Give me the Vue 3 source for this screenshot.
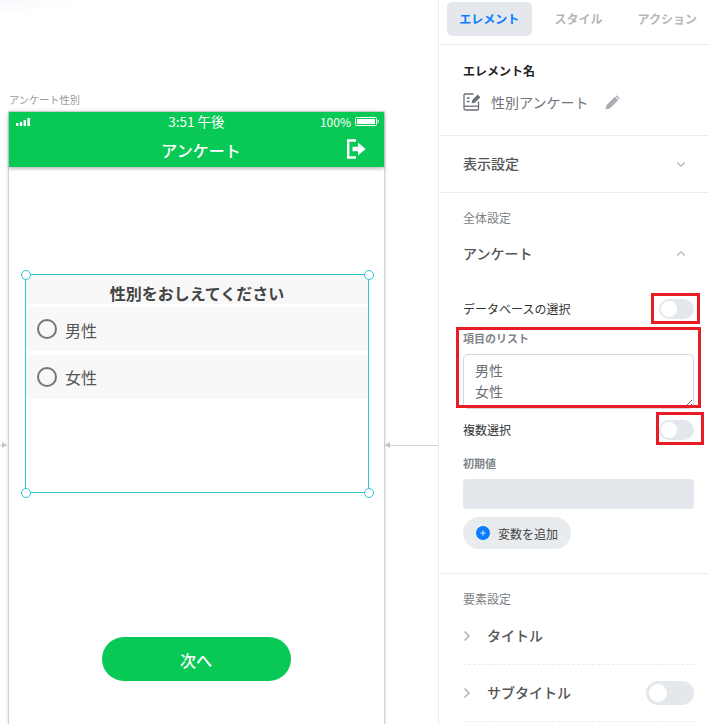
<template>
  <div class="page">
    <div class="canvas">
      <div class="screen-wrap">
        <div class="screen-name">アンケート性別</div>
        <div class="phone">
          <header class="app-head">
            <div class="status">
              <svg class="signal" width="15" height="8" viewBox="0 0 15 8">
                <rect x="0" y="5" width="2.4" height="3" fill="#fff" />
                <rect x="3.8" y="4" width="2.4" height="4" fill="#fff" />
                <rect x="7.6" y="2" width="2.4" height="6" fill="#fff" />
                <rect x="11.4" y="0" width="2.6" height="8" fill="#fff" />
              </svg>
              <span class="clock">3:51 午後</span>
              <span class="battery">
                100%
                <svg width="24" height="9" viewBox="0 0 24 9">
                  <rect x="0.5" y="0.5" width="21" height="8" rx="1" fill="none" stroke="#fff" />
                  <rect x="2" y="2" width="18" height="5" fill="#fff" />
                  <rect x="22.6" y="3" width="1" height="3" fill="#fff" />
                </svg>
              </span>
            </div>
            <div class="app-title">
              アンケート
              <svg class="exit" width="20" height="20" viewBox="0 0 20 20">
                <path d="M10 1.5H2.2V18.5H10" fill="none" stroke="#fff" stroke-width="2.4" />
                <path d="M6.5 7.8H12V3.6L19.6 10L12 16.4V12.2H6.5Z" fill="#fff" />
              </svg>
            </div>
          </header>

          <div class="phone-body">
            <div class="selected">
              <span v-for="h in handles" :key="h" class="handle" :class="h"></span>
              <div class="q-title">性別をおしえてください</div>
              <div v-for="o in options" :key="o" class="option">
                <span class="radio"></span>
                <span class="option-text">{{ o }}</span>
              </div>
            </div>
            <button class="next" type="button">次へ</button>
          </div>
        </div>
      </div>
      <div class="arrow arrow-left"></div>
      <div class="arrow arrow-right"></div>
    </div>

    <aside class="panel">
      <nav class="tabs">
        <a class="tab active">エレメント</a>
        <a class="tab">スタイル</a>
        <a class="tab">アクション</a>
      </nav>

      <section class="name-sec">
        <h3>エレメント名</h3>
        <div class="name-row">
          <svg width="18" height="18" viewBox="0 0 18 18" fill="none" stroke="#6b7075" stroke-width="1.3">
            <path d="M10.5 1H2a1 1 0 0 0-1 1v13.5A1.5 1.5 0 0 0 2.5 17H14.5a1 1 0 0 0 1-1V8.5" />
            <path d="M1 13.2H15.5" />
            <path d="M3.8 5H6.6M3.8 8.5H6.6" />
            <path d="M8.6 10.2L9.2 7.2L14.6 1.6L17.4 4.2L11.8 9.8Z" fill="#6b7075" stroke="none" />
          </svg>
          <span class="el-name">性別アンケート</span>
          <svg width="15" height="15" viewBox="0 0 15 15">
            <path d="M0.5 14.5L1.5 10.2L9.8 1.8L13.2 5.2L4.8 13.5ZM10.8 0.8Q11.5 0.2 12.2 0.8L14.2 2.8Q14.8 3.5 14.2 4.2L13.9 4.5L10.5 1.1Z" fill="#a7adb2" />
          </svg>
        </div>
      </section>

      <section class="row-sec display">
        <span class="sec-title">表示設定</span>
        <svg class="chev" width="10" height="7" viewBox="0 0 12 8"><path d="M1.5 1.5L6 6L10.5 1.5" /></svg>
      </section>

      <section class="global">
        <div class="group-label">全体設定</div>
        <div class="survey-head">
          <span class="survey-title">アンケート</span>
          <svg class="chev" width="10" height="7" viewBox="0 0 12 8"><path d="M1.5 6.5L6 2L10.5 6.5" /></svg>
        </div>
        <div class="setting db">
          <span class="setting-text">データベースの選択</span>
          <span class="toggle"></span>
        </div>
        <label class="list-label">項目のリスト</label>
        <textarea class="list-input" :value="listText"></textarea>
        <div class="setting multi">
          <span class="setting-text">複数選択</span>
          <span class="toggle"></span>
        </div>
        <label class="init-label">初期値</label>
        <div class="init-input"></div>
        <button class="add-var" type="button">
          <svg width="14" height="14" viewBox="0 0 14 14">
            <circle cx="7" cy="7" r="7" fill="#0a7cff" />
            <path d="M7 4.2V9.8M4.2 7H9.8" stroke="#cfe4ff" stroke-width="1.1" />
          </svg>
          変数を追加
        </button>
      </section>

      <section class="elements">
        <div class="group-label">要素設定</div>
        <div class="el-row">
          <svg class="chev-r" width="8" height="12" viewBox="0 0 8 12"><path d="M1.5 1.5L6 6L1.5 10.5" /></svg>
          <span class="el-text">タイトル</span>
        </div>
        <div class="el-row">
          <svg class="chev-r" width="8" height="12" viewBox="0 0 8 12"><path d="M1.5 1.5L6 6L1.5 10.5" /></svg>
          <span class="el-text">サブタイトル</span>
          <span class="toggle big"></span>
        </div>
      </section>

      <div class="mark mark-db"></div>
      <div class="mark mark-list"></div>
      <div class="mark mark-multi"></div>
    </aside>
  </div>
</template>

<script setup>
const handles = ['tl', 'tr', 'bl', 'br']
const options = ['男性', '女性']
const listText = '男性\n女性'
</script>

<style>
html, body {
  margin: 0;
  background: #fff;
}
</style>

<style scoped>
.page {
  width: 709px;
  height: 724px;
  display: flex;
  overflow: hidden;
  background: #fff;
  font-family: "Noto Sans CJK JP", "Noto Sans", sans-serif;
  color: #4a4a4a;
}

/* canvas */
.canvas {
  position: relative;
  width: 438px;
  flex-shrink: 0;
  overflow: hidden;
  background: radial-gradient(ellipse 85px 14px at 0 0, #f7f9fc, #fff);
}
.screen-wrap {
  position: absolute;
  left: 9px;
  top: 93px;
  width: 375px;
}
.screen-name {
  height: 19px;
  font-size: 10.2px;
  line-height: 14px;
  color: #9a9a9a;
}
.phone {
  height: 640px;
  background: #fff;
  box-shadow: 0 0 0 1px #d2d2d2, 0 0 4px rgba(0, 0, 0, 0.25);
}
.app-head {
  height: 55px;
  background: #08c955;
  color: #fff;
  box-shadow: 0 2px 3px rgba(0, 0, 0, 0.25);
  position: relative;
}
.status {
  height: 18px;
  padding: 0 5px 3px 7px;
  display: flex;
  align-items: center;
  justify-content: space-between;
  position: relative;
  font-size: 12px;
}
.signal {
  margin-top: 1px;
}
.clock {
  position: absolute;
  left: 0;
  right: 0;
  text-align: center;
  font-size: 13.5px;
}
.battery {
  display: flex;
  align-items: center;
  gap: 4px;
  font-size: 12px;
}
.app-title {
  height: 34px;
  padding-left: 9px;
  display: flex;
  align-items: center;
  justify-content: center;
  position: relative;
  font-size: 16px;
  font-weight: 500;
}
.exit {
  position: absolute;
  right: 18px;
  top: 6px;
}
.phone-body {
  padding: 107px 15px 0 16px;
  display: flex;
  flex-direction: column;
}
.selected {
  position: relative;
  height: 219px;
  box-sizing: border-box;
  border: 1px solid #2dc3d9;
  padding-top: 1px;
  display: flex;
  flex-direction: column;
}
.handle {
  position: absolute;
  width: 10px;
  height: 10px;
  box-sizing: border-box;
  background: #fff;
  border: 1.5px solid #2dc3d9;
  border-radius: 50%;
}
.tl { left: -5.5px; top: -5.5px; }
.tr { right: -5.5px; top: -5.5px; }
.bl { left: -5.5px; bottom: -5.5px; }
.br { right: -5.5px; bottom: -5.5px; }
.q-title {
  height: 28px;
  line-height: 35px;
  background: #f8f8f8;
  text-align: center;
  font-size: 16px;
  font-weight: 700;
  color: #444;
}
.option {
  height: 44px;
  margin-top: 3.4px;
  background: #f8f8f8;
  display: flex;
  align-items: center;
  gap: 8px;
  padding-left: 11px;
  font-size: 16px;
  color: #555;
}
.option-text {
  margin-top: 1px;
}
.radio {
  width: 20px;
  height: 20px;
  box-sizing: border-box;
  border: 2px solid #757575;
  border-radius: 50%;
}
.next {
  align-self: center;
  width: 189px;
  height: 44px;
  margin: 144px 2px 0 0;
  padding-top: 2px;
  border: none;
  border-radius: 22px;
  background: #08c955;
  color: #fff;
  font-family: inherit;
  font-size: 16px;
  font-weight: 500;
}
.arrow {
  position: absolute;
  top: 445px;
  height: 1px;
  background: #d0d0d0;
}
.arrow::before {
  content: "";
  position: absolute;
  top: -3px;
  border-top: 3.5px solid transparent;
  border-bottom: 3.5px solid transparent;
}
.arrow-left {
  left: 0;
  width: 7px;
}
.arrow-left::before {
  right: 0;
  border-left: 5px solid #c4c4c4;
}
.arrow-right {
  left: 385px;
  width: 53px;
}
.arrow-right::before {
  left: 0;
  border-right: 5px solid #c4c4c4;
}

/* panel */
.panel {
  position: relative;
  width: 271px;
  box-sizing: border-box;
  border-left: 1px solid #e9edf1;
  flex-shrink: 0;
}
.tabs {
  height: 45px;
  box-sizing: border-box;
  border-bottom: 1px solid #e9edf1;
  display: flex;
  align-items: flex-start;
  padding: 2px 0 0 8px;
}
.tab {
  height: 34px;
  line-height: 34px;
  font-size: 12px;
  font-weight: 700;
  color: #b4b8bc;
  padding-right: 12px;
  margin-left: 23px;
  white-space: nowrap;
}
.tab.active {
  width: 85px;
  box-sizing: border-box;
  margin-left: 0;
  padding: 0;
  text-align: center;
  background: #e4e8ec;
  border-radius: 5px;
  color: #0a7cff;
}
.name-sec {
  height: 91px;
  box-sizing: border-box;
  border-bottom: 1px solid #e9edf1;
  padding: 17px 24px 0;
}
.name-sec h3 {
  margin: 0;
  font-size: 12px;
  line-height: 18px;
  font-weight: 700;
  color: #222;
}
.name-row {
  display: flex;
  align-items: center;
  margin-top: 12px;
  height: 20px;
}
.el-name {
  margin: 0 17px 0 10px;
  font-size: 14px;
  color: #6e7479;
}
.row-sec {
  height: 57px;
  box-sizing: border-box;
  border-bottom: 1px solid #e9edf1;
  display: flex;
  align-items: center;
  justify-content: space-between;
  padding: 0 23px 0 24px;
}
.sec-title {
  font-size: 14px;
  line-height: 18px;
  margin-top: -2px;
  font-weight: 500;
  color: #555;
}
.chev, .chev-r {
  fill: none;
  stroke: #b2b7bb;
  stroke-width: 1.6;
  flex-shrink: 0;
}
.global {
  height: 381px;
  box-sizing: border-box;
  border-bottom: 1px solid #e9edf1;
  padding: 16px 15px 0 24px;
  display: flex;
  flex-direction: column;
}
.group-label {
  font-size: 12px;
  line-height: 18px;
  color: #7c8085;
}
.survey-head {
  display: flex;
  align-items: center;
  justify-content: space-between;
  margin-top: 16px;
  height: 20px;
  padding-right: 8px;
}
.survey-title {
  font-size: 14px;
  font-weight: 500;
  color: #555;
}
.setting {
  display: flex;
  align-items: center;
  justify-content: space-between;
  height: 20px;
  font-size: 12px;
  color: #333;
}
.setting-text {
  margin-top: -2px;
}
.db {
  margin-top: 36px;
}
.toggle {
  width: 35px;
  height: 20px;
  border-radius: 10px;
  background: #e4e8ec;
  position: relative;
}
.toggle::after {
  content: "";
  position: absolute;
  left: 2px;
  top: 2px;
  width: 16px;
  height: 16px;
  border-radius: 50%;
  background: #fff;
}
.toggle.big {
  width: 48px;
  height: 24px;
  border-radius: 12px;
  margin-left: auto;
}
.toggle.big::after {
  left: 3px;
  top: 3px;
  width: 18px;
  height: 18px;
}
.list-label, .init-label {
  font-size: 11px;
  line-height: 16px;
  font-weight: 700;
  color: #808589;
}
.list-label {
  margin-top: 11px;
}
.list-input {
  margin-top: 8px;
  height: 55px;
  box-sizing: border-box;
  border: 1px solid #d5d9de;
  border-radius: 5px;
  padding: 5px 11px;
  font-family: inherit;
  font-size: 14px;
  line-height: 21px;
  color: #6a6f74;
  background: #fff;
  flex-shrink: 0;
  outline: none;
}
.multi {
  margin-top: 11px;
}
.init-label {
  margin-top: 15px;
}
.init-input {
  margin-top: 8px;
  height: 30px;
  border-radius: 4px;
  background: #e4e8ec;
  flex-shrink: 0;
}
.add-var {
  align-self: flex-start;
  display: flex;
  align-items: center;
  gap: 8px;
  margin-top: 8px;
  height: 32px;
  padding: 0 13px;
  border: none;
  border-radius: 16px;
  background: #e9ecef;
  font-family: inherit;
  font-size: 12px;
  color: #444;
}
.elements {
  padding: 16px 15px 0 24px;
}
.el-row {
  height: 57px;
  box-sizing: border-box;
  border-bottom: 1px dashed #e9edf1;
  display: flex;
  align-items: center;
  gap: 16px;
  font-size: 14px;
  font-weight: 500;
  color: #555;
}
.el-text {
  margin-top: -2px;
}
.mark {
  position: absolute;
  box-sizing: border-box;
  border: 3px solid #e81c24;
  pointer-events: none;
}
.mark-db { left: 212px; top: 293px; width: 49px; height: 31px; }
.mark-list { left: 17px; top: 327px; width: 245px; height: 81px; }
.mark-multi { left: 217px; top: 412px; width: 48px; height: 33px; }
</style>
